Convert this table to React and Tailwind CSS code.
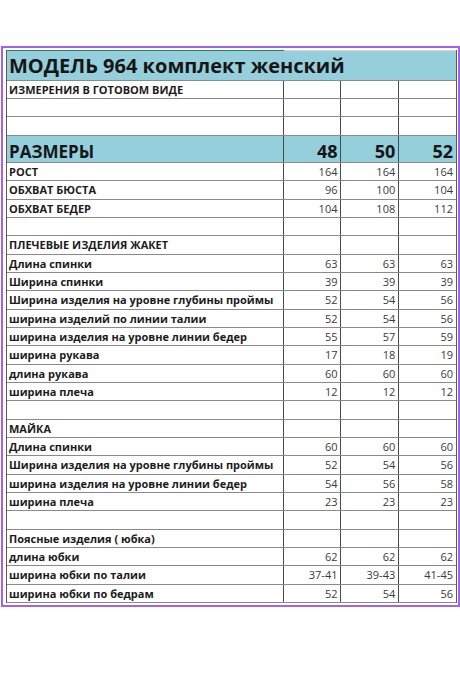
const rows = [
  { t: "ИЗМЕРЕНИЯ В ГОТОВОМ ВИДЕ" },
  { t: "" },
  { t: "" },
  { t: "РАЗМЕРЫ", v: ["48", "50", "52"], head: true },
  { t: "РОСТ", v: ["164", "164", "164"] },
  { t: "ОБХВАТ БЮСТА", v: ["96", "100", "104"] },
  { t: "ОБХВАТ БЕДЕР", v: ["104", "108", "112"] },
  { t: "" },
  { t: "ПЛЕЧЕВЫЕ ИЗДЕЛИЯ ЖАКЕТ" },
  { t: "Длина спинки", v: ["63", "63", "63"] },
  { t: "Ширина спинки", v: ["39", "39", "39"] },
  { t: "Ширина изделия на уровне глубины проймы", v: ["52", "54", "56"] },
  { t: "ширина изделий по линии талии", v: ["52", "54", "56"] },
  { t: "ширина изделия на уровне линии бедер", v: ["55", "57", "59"] },
  { t: "ширина рукава", v: ["17", "18", "19"] },
  { t: "длина рукава", v: ["60", "60", "60"] },
  { t: "ширина плеча", v: ["12", "12", "12"] },
  { t: "" },
  { t: "МАЙКА" },
  { t: "Длина спинки", v: ["60", "60", "60"] },
  { t: "Ширина изделия на уровне глубины проймы", v: ["52", "54", "56"] },
  { t: "ширина изделия на уровне линии бедер", v: ["54", "56", "58"] },
  { t: "ширина плеча", v: ["23", "23", "23"] },
  { t: "" },
  { t: "Поясные изделия ( юбка)" },
  { t: "длина юбки", v: ["62", "62", "62"] },
  { t: "ширина юбки по талии", v: ["37-41", "39-43", "41-45"] },
  { t: "ширина юбки по бедрам", v: ["52", "54", "56"] },
];

const Row = ({ row, i }) => {
  if (row.head) {
    return (
      <div className="flex h-[27px] bg-[#96cfdc] border-b border-[#8a8a8a]">
        <div className="w-[277px] flex items-end pl-[2px] pb-[2px] text-[17px] font-bold text-[#161616] leading-none">
          {row.t}
        </div>
        {row.v.map((v, k) => (
          <div key={k} className="w-[58px] border-l border-[#4a4a4a] flex items-end justify-end pr-[3px] pb-[2px] text-[18px] font-bold text-[#161616] leading-none">
            {v}
          </div>
        ))}
      </div>
    );
  }
  const h = i % 3 === 2 ? "h-[19px]" : "h-[18px]";
  return (
    <div className={`flex ${h} border-b border-[#8a8a8a]`}>
      <div className="w-[277px] flex items-center pl-[2px] pt-[1px] text-[11px] font-bold text-[#1c1c1c] whitespace-nowrap">
        {row.t}
      </div>
      {[0, 1, 2].map((k) => (
        <div key={k} className="w-[58px] border-l border-[#4a4a4a] flex items-center justify-end pr-[3px] pt-[1px] text-[11px] text-[#3a3a3a]">
          {row.v ? row.v[k] : ""}
        </div>
      ))}
    </div>
  );
};

export default function App() {
  return (
    <div className="w-[460px] h-[690px] bg-white pt-[46px] pl-[1px] font-['Open_Sans',sans-serif]">
      <div className="h-[561px] border-2 border-[#9f63ee] pl-[3px] pr-[1px] pt-[2px]">
        <div className="w-[451px] border-l border-r border-[#5a5a5a]">
          <div className="flex h-[1px]">
            <div className="w-[277px] bg-[#2f7f68]" />
            <div className="flex-1 bg-[#d8d8d8]" />
          </div>
          <div className="h-[30px] bg-[#96cfdc] flex items-center pl-[2px] text-[20px] font-bold text-[#161616] border-b border-[#8a8a8a]">
            МОДЕЛЬ 964 комплект женский
          </div>
          {rows.map((r, i) => (
            <Row key={i} row={r} i={i} />
          ))}
        </div>
      </div>
    </div>
  );
}
